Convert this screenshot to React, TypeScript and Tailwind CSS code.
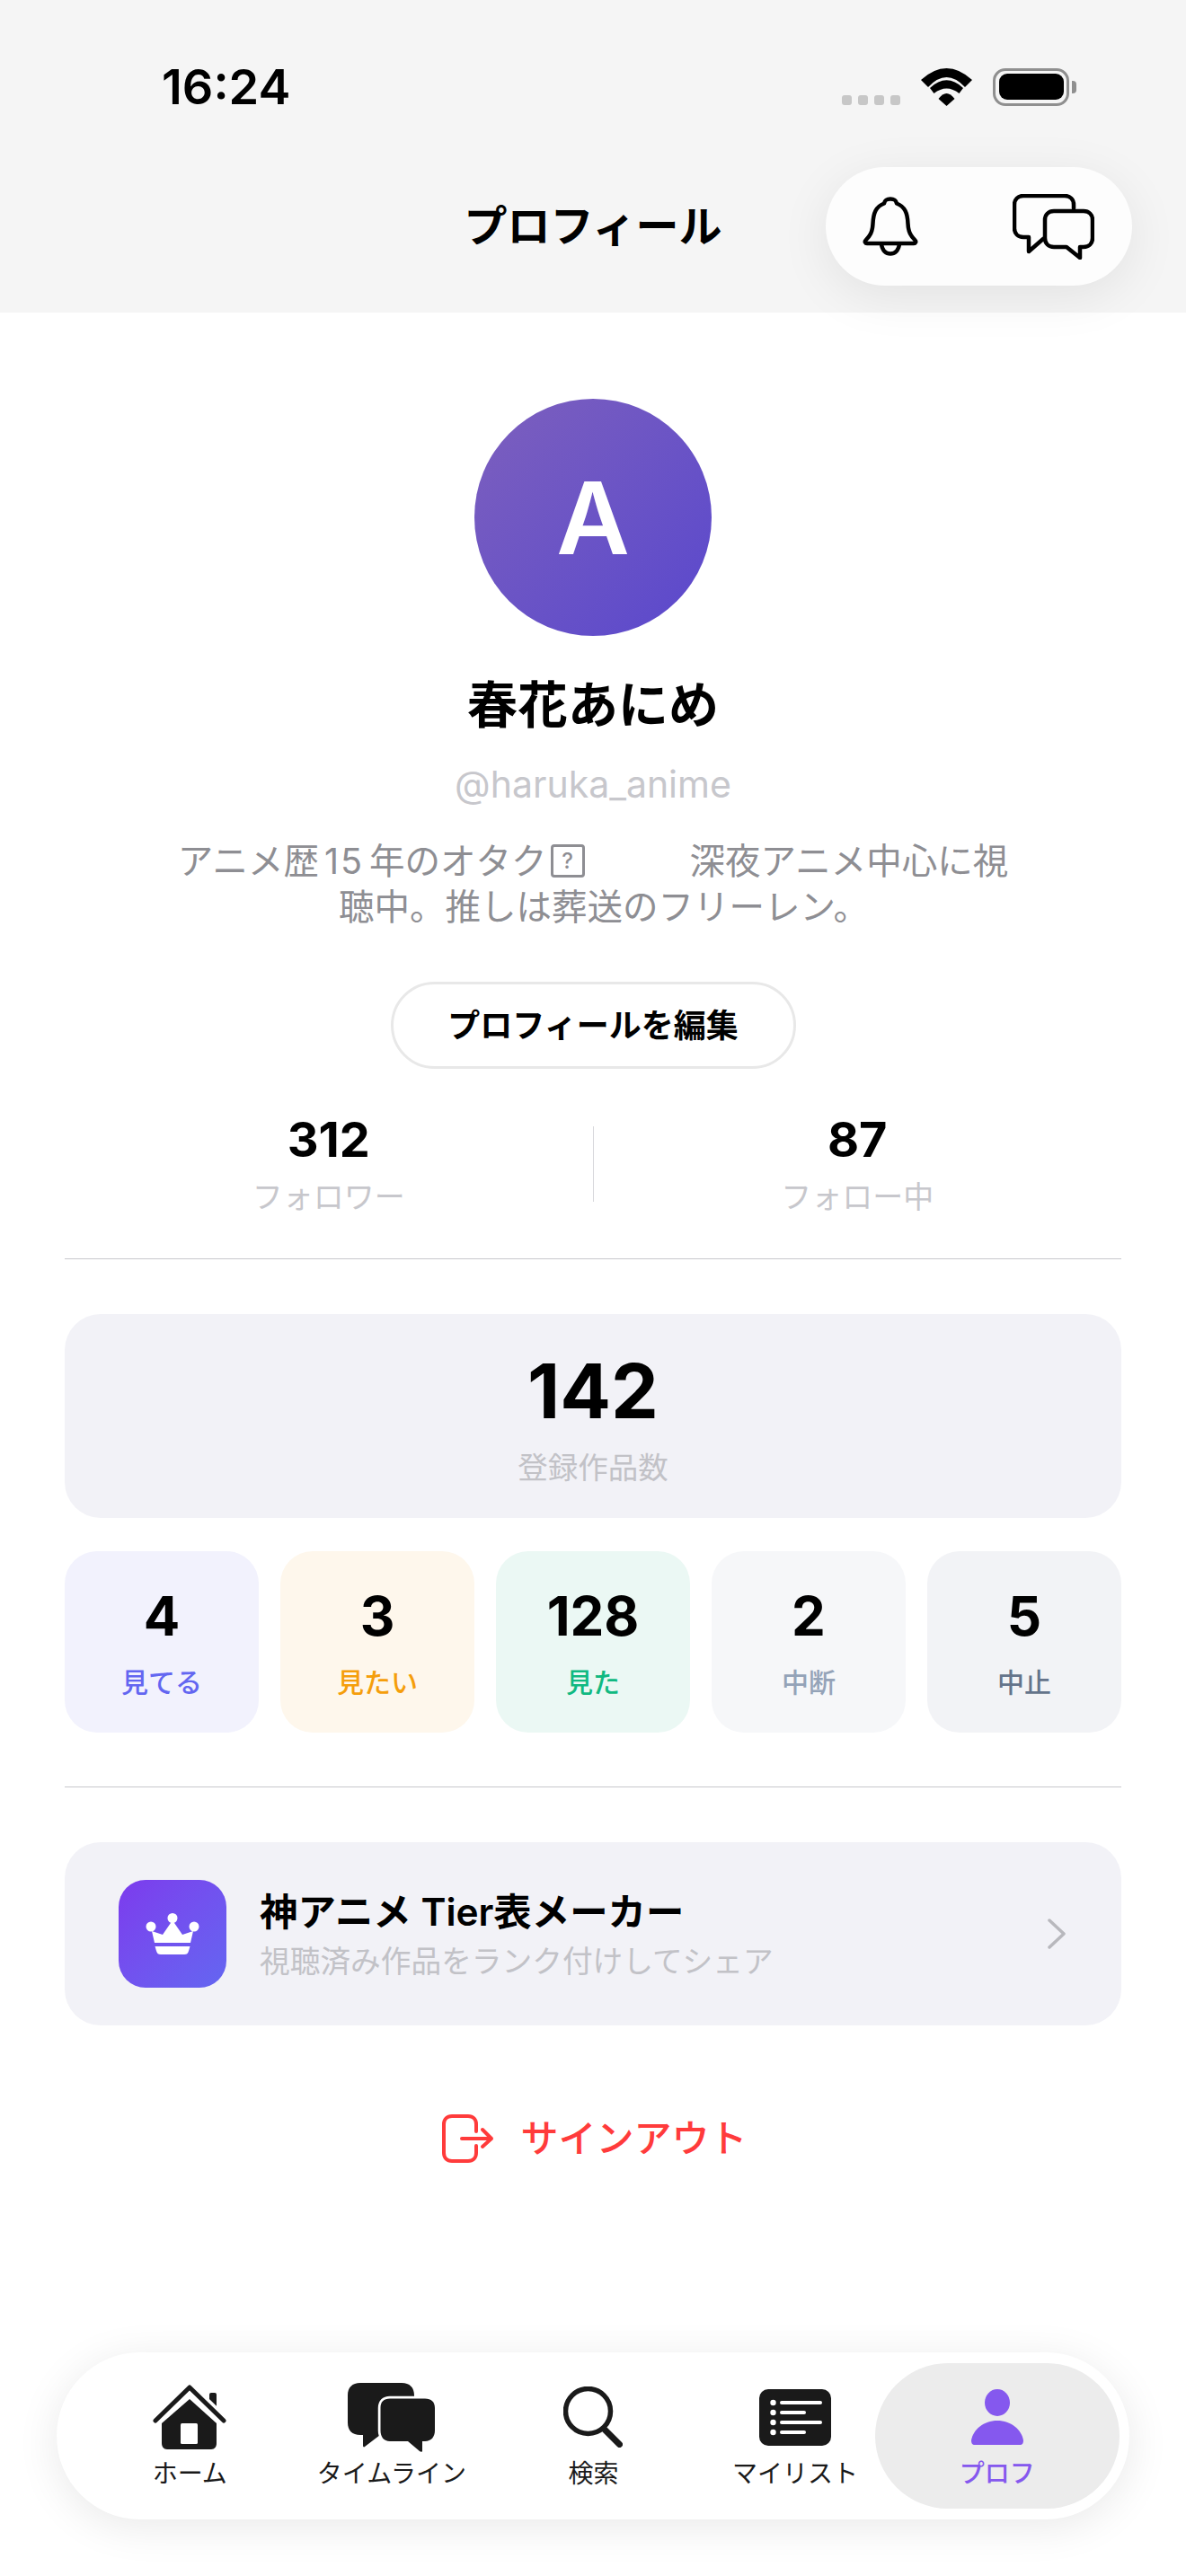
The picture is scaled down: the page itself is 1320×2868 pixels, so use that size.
import type { ReactNode } from "react";

const counts = [
  { value: "4", label: "見てる", box: "bg-[#f2f2fd]", text: "text-[#6366f1]" },
  { value: "3", label: "見たい", box: "bg-[#fef7ec]", text: "text-[#f59e0b]" },
  { value: "128", label: "見た", box: "bg-[#ebf8f4]", text: "text-[#10b981]" },
  { value: "2", label: "中断", box: "bg-[#f6f7f9]", text: "text-[#94a3b8]" },
  { value: "5", label: "中止", box: "bg-[#f2f3f6]", text: "text-[#64748b]" },
];

function Wifi() {
  return (
    <svg width="57" height="42" viewBox="0 0 57 42" fill="#000">
      <path d="M0 13Q28.5-13 57 13L49 21Q28.5-1 8 21Z" />
      <path d="M10 22Q28.5 4.6 47 22L42.5 28Q28.5 17 14.5 28Z" />
      <path d="M19.5 34Q28.5 22 37.5 34L28.5 42Z" />
    </svg>
  );
}

function Battery() {
  return (
    <div className="flex items-center gap-[3px]">
      <div className="w-[85px] h-[42px] rounded-[14px] border-[3.5px] border-[#8f8f8f] p-[3.5px]">
        <div className="w-full h-full rounded-[9px] bg-black" />
      </div>
      <div className="w-[5px] h-[14px] rounded-r-[4px] bg-[#8f8f8f]" />
    </div>
  );
}

function Bell() {
  return (
    <svg width="62" height="66" viewBox="0 0 62 66" fill="none" stroke="#000" strokeWidth="4.5" strokeLinejoin="round" strokeLinecap="round">
      <path d="M5 52C3 52 2 50 3.5 48.5C8 44 11 40 11.5 30C12 18 15 11 24 7.5C25 3.5 27 2.5 31 2.5C35 2.5 37 3.5 38 7.5C47 11 50 18 50.5 30C51 40 54 44 58.5 48.5C60 50 59 52 57 52Z" />
      <path d="M21 53C22 60 26 63.5 31 63.5C36 63.5 40 60 41 53" />
    </svg>
  );
}

function ChatOutline() {
  return (
    <svg width="91" height="73" viewBox="0 0 91 73" fill="none" stroke="#000" strokeWidth="4.5" strokeLinejoin="round" strokeLinecap="round">
      <path d="M68 16V12C68 6 64 2 58 2H12C6 2 2 6 2 12V38C2 44 6 48 12 48H18V64L34 50" />
      <path d="M46 19H79C85 19 89 23 89 29V49C89 55 85 59 79 59H75V71L60 59H46C40 59 36 55 36 49V29C36 23 40 19 46 19Z" />
    </svg>
  );
}

function HomeIcon() {
  return (
    <svg width="82" height="72" viewBox="0 0 82 72" fill="#1a1a1a">
      <rect x="63" y="9" width="8" height="18" rx="2" />
      <path d="M41 16L71 43V65C71 69 69 72 65 72H16C12 72 10 69 10 65V43Z" />
      <path d="M3 40L41 3L79 40" fill="none" stroke="#fff" strokeWidth="12" strokeLinecap="round" strokeLinejoin="round" />
      <path d="M3 40L41 3L79 40" fill="none" stroke="#1a1a1a" strokeWidth="5" strokeLinecap="round" strokeLinejoin="round" />
      <rect x="31" y="43" width="19" height="23" rx="1.5" fill="#fff" />
    </svg>
  );
}

function ChatSolid() {
  return (
    <svg width="97" height="77" viewBox="0 0 97 77" fill="#1a1a1a">
      <path d="M14 0H60C69 0 74 5 74 14V50C74 60 69 58 60 58H36L19 71C18 72 17 71 17 70V58H14C5 58 0 53 0 44V14C0 5 5 0 14 0Z" />
      <path d="M47 17H86C93 17 97 21 97 28V53C97 60 93 65 86 65H83V76C83 77 81 77 80 76L67 65H47C40 65 36 60 36 53V28C36 21 40 17 47 17Z" stroke="#fff" strokeWidth="4.5" />
      <path d="M47 17.5H86C93 17.5 97 21 97 28V53C97 60 93 65 86 65H83V76C83 77 81 77 80 76L67 65H47C40 65 36.5 60 36.5 53V28C36.5 21 40 17.5 47 17.5Z" />
    </svg>
  );
}

function SearchIcon() {
  return (
    <svg width="66" height="68" viewBox="0 0 66 68" fill="none" stroke="#1a1a1a" strokeLinecap="round">
      <circle cx="27.5" cy="27.5" r="25" strokeWidth="5.5" />
      <path d="M46 48L62.5 64.5" strokeWidth="7" />
    </svg>
  );
}

function ListIcon() {
  const rows = [
    { y: 15, end: 68 },
    { y: 26, end: 50 },
    { y: 37, end: 68 },
    { y: 48, end: 50 },
  ];
  return (
    <svg width="80" height="63" viewBox="0 0 80 63">
      <rect width="80" height="63" rx="10" fill="#1a1a1a" />
      {rows.map((r) => (
        <g key={r.y}>
          <circle cx="15.5" cy={r.y} r="3.2" fill="#fff" />
          <path d={`M25 ${r.y}H${r.end}`} stroke="#fff" strokeWidth="4" strokeLinecap="round" />
        </g>
      ))}
    </svg>
  );
}

function PersonIcon() {
  return (
    <svg width="58" height="62" viewBox="0 0 58 62" fill="#8558ee">
      <ellipse cx="29" cy="15" rx="14" ry="15" />
      <path d="M4 62C1 62 0 60 0 57C2 45 14 35 29 35C44 35 56 45 58 57C58 60 57 62 54 62Z" />
    </svg>
  );
}

function Crown() {
  return (
    <svg width="60" height="46" viewBox="0 0 60 46" fill="#fff">
      <circle cx="30" cy="5.5" r="5.5" />
      <circle cx="6" cy="15" r="5.5" />
      <circle cx="54" cy="15" r="5.5" />
      <path d="M7 20L19 24L30 8L41 24L53 20L50 33H10Z" />
      <path d="M10.5 37H49.5L48 42C47 45 46 46 43 46H17C14 46 13 45 12 42Z" />
    </svg>
  );
}

function SignOut() {
  return (
    <svg width="58" height="54" viewBox="0 0 58 54" fill="none" stroke="#ff3b3b" strokeWidth="4" strokeLinecap="round" strokeLinejoin="round">
      <path d="M38 19V11C38 5.5 34.5 2 29 2H11C5.5 2 2 5.5 2 11V43C2 48.5 5.5 52 11 52H29C34.5 52 38 48.5 38 43V35" />
      <path d="M22 27H55M45 17L55 27L45 36" />
    </svg>
  );
}

type TTab = {
  label: string;
  icon: ReactNode;
  active?: boolean;
};

const tabs: TTab[] = [
  { label: "ホーム", icon: <HomeIcon /> },
  { label: "タイムライン", icon: <ChatSolid /> },
  { label: "検索", icon: <SearchIcon /> },
  { label: "マイリスト", icon: <ListIcon /> },
  { label: "プロフ", icon: <PersonIcon />, active: true },
];

function Tab({ label, icon, active }: TTab) {
  return (
    <div className="relative flex-1 flex flex-col items-center pt-[33px]">
      {active && <div className="absolute top-[12px] bottom-[12px] -left-[23px] -right-[24px] rounded-full bg-[#ececec]" />}
      <div className="relative h-[78px] flex items-center justify-center">{icon}</div>
      <p className={`relative mt-[4px] text-[28px] leading-[40px] whitespace-nowrap ${active ? "text-[#8558ee] font-medium" : "text-[#1a1a1a]"}`}>
        {label}
      </p>
    </div>
  );
}

export default function App() {
  return (
    <div className="relative w-[1320px] h-[2868px] overflow-hidden bg-white flex flex-col font-[Inter,'Noto_Sans_CJK_JP',sans-serif] text-black">
      <header className="relative z-10 h-[348px] shrink-0 bg-[#f5f5f5] pt-[75px]">
        <div className="h-[43px] flex items-center justify-between pl-[180px] pr-[122px]">
          <span className="text-[54px] leading-[43px] font-semibold">16:24</span>
          <div className="flex items-end">
            <div className="flex gap-[7px] mb-[1px] mr-[23px]">
              <span className="w-[11px] h-[11px] rounded-[3px] bg-[#c7c7c7]" />
              <span className="w-[11px] h-[11px] rounded-[3px] bg-[#c7c7c7]" />
              <span className="w-[11px] h-[11px] rounded-[3px] bg-[#c7c7c7]" />
              <span className="w-[11px] h-[11px] rounded-[3px] bg-[#c7c7c7]" />
            </div>
            <div className="mr-[23px] flex">
              <Wifi />
            </div>
            <Battery />
          </div>
        </div>
        <div className="mt-[68px] h-[132px] px-[60px] grid grid-cols-[1fr_auto_1fr] items-center">
          <div />
          <h1 className="text-[48px] leading-[60px] font-semibold">プロフィール</h1>
          <div className="justify-self-end w-[341px] h-[132px] rounded-full bg-[#fdfdfd] shadow-[0_12px_56px_rgba(0,0,0,0.08)] flex items-center justify-between pl-[41px] pr-[42px]">
            <Bell />
            <ChatOutline />
          </div>
        </div>
      </header>

      <main className="px-[72px] flex flex-col items-stretch">
        <div className="self-center mt-[96px] w-[264px] h-[264px] rounded-full bg-gradient-to-br from-[#7d5fbd] to-[#5a47cd] flex items-center justify-center">
          <span className="text-[112px] leading-none font-semibold text-white">A</span>
        </div>
        <h2 className="mt-[43px] text-center text-[56px] leading-[68px] font-bold">春花あにめ</h2>
        <p className="mt-[29px] text-center text-[41px] leading-[50px] text-[#c7c7cc]">@haruka_anime</p>
        <div className="mt-[36px] text-center text-[39.5px] leading-[51px] text-[#8e8e93]">
          <p className="h-[51px]">
            アニメ歴<span className="mx-[6px] tracking-[2px]">15</span>年のオタク
            <span className="relative -top-[10px] inline-block align-[-4px] ml-[4px] mr-[117px] w-[38px] h-[37px] rounded-[4px] border-[3px] border-[#8e8e93] text-[24px] leading-[31px] font-medium">?</span>
            深夜アニメ中心に視
          </p>
          <p className="h-[51px] pl-[24px]">聴中。推しは葬送のフリーレン。</p>
        </div>
        <div className="self-center mt-[57px] w-[451px] h-[97px] rounded-full border-[3px] border-[#e8e8e8] flex items-center justify-center text-[36px] font-semibold">
          プロフィールを編集
        </div>

        <div className="mt-[48px] flex">
          <div className="flex-1 flex flex-col items-center">
            <span className="text-[54px] leading-[62px] font-bold">312</span>
            <span className="mt-[9px] text-[34px] leading-[48px] text-[#c7c7cc]">フォロワー</span>
          </div>
          <div className="mt-[16px] w-px h-[84px] bg-[#d8d8dc]" />
          <div className="flex-1 flex flex-col items-center">
            <span className="text-[54px] leading-[62px] font-bold">87</span>
            <span className="mt-[9px] text-[34px] leading-[48px] text-[#c7c7cc]">フォロー中</span>
          </div>
        </div>

        <div className="mt-[44px] h-px bg-[#c8c8cc]" />

        <div className="mt-[61px] h-[227px] rounded-[40px] bg-[#f2f2f7] pt-[36px] flex flex-col items-center">
          <span className="text-[84px] leading-[100px] font-bold">142</span>
          <span className="mt-[11px] text-[33.5px] leading-[48px] text-[#c2c2c7]">登録作品数</span>
        </div>

        <div className="mt-[37px] grid grid-cols-5 gap-[24px]">
          {counts.map((c) => (
            <div key={c.label} className={`h-[202px] rounded-[36px] pt-[37px] flex flex-col items-center ${c.box}`}>
              <span className="text-[60px] leading-[70px] font-bold">{c.value}</span>
              <span className={`mt-[19px] text-[30px] leading-[40px] font-medium ${c.text}`}>{c.label}</span>
            </div>
          ))}
        </div>

        <div className="mt-[60px] h-px bg-[#c8c8cc]" />

        <div className="mt-[61px] h-[204px] rounded-[40px] bg-[#f2f2f7] pl-[60px] pr-[62px] flex items-center">
          <div className="w-[120px] h-[120px] rounded-[30px] bg-gradient-to-br from-[#7c3aed] to-[#6366f1] flex items-center justify-center">
            <Crown />
          </div>
          <div className="ml-[37px] flex-1">
            <p className="text-[42.4px] leading-[56px] font-semibold">神アニメ Tier表メーカー</p>
            <p className="mt-[5px] text-[33.7px] leading-[44px] text-[#c2c2c7]">視聴済み作品をランク付けしてシェア</p>
          </div>
          <svg width="20" height="34" viewBox="0 0 20 34" fill="none" stroke="#b8b8bd" strokeWidth="3.5" strokeLinecap="round" strokeLinejoin="round">
            <path d="M2 2L18 17L2 32" />
          </svg>
        </div>

        <div className="mt-[99px] pl-[4px] flex items-center justify-center gap-[29px]">
          <SignOut />
          <span className="text-[42px] leading-[54px] font-medium text-[#ff3b3b]">サインアウト</span>
        </div>
      </main>

      <nav className="mt-auto mb-[63px] mx-[63px] h-[186px] rounded-full bg-white shadow-[0_8px_48px_rgba(0,0,0,0.09)] pl-[36px] pr-[35px] flex">
        {tabs.map((t) => (
          <Tab key={t.label} {...t} />
        ))}
      </nav>
    </div>
  );
}
